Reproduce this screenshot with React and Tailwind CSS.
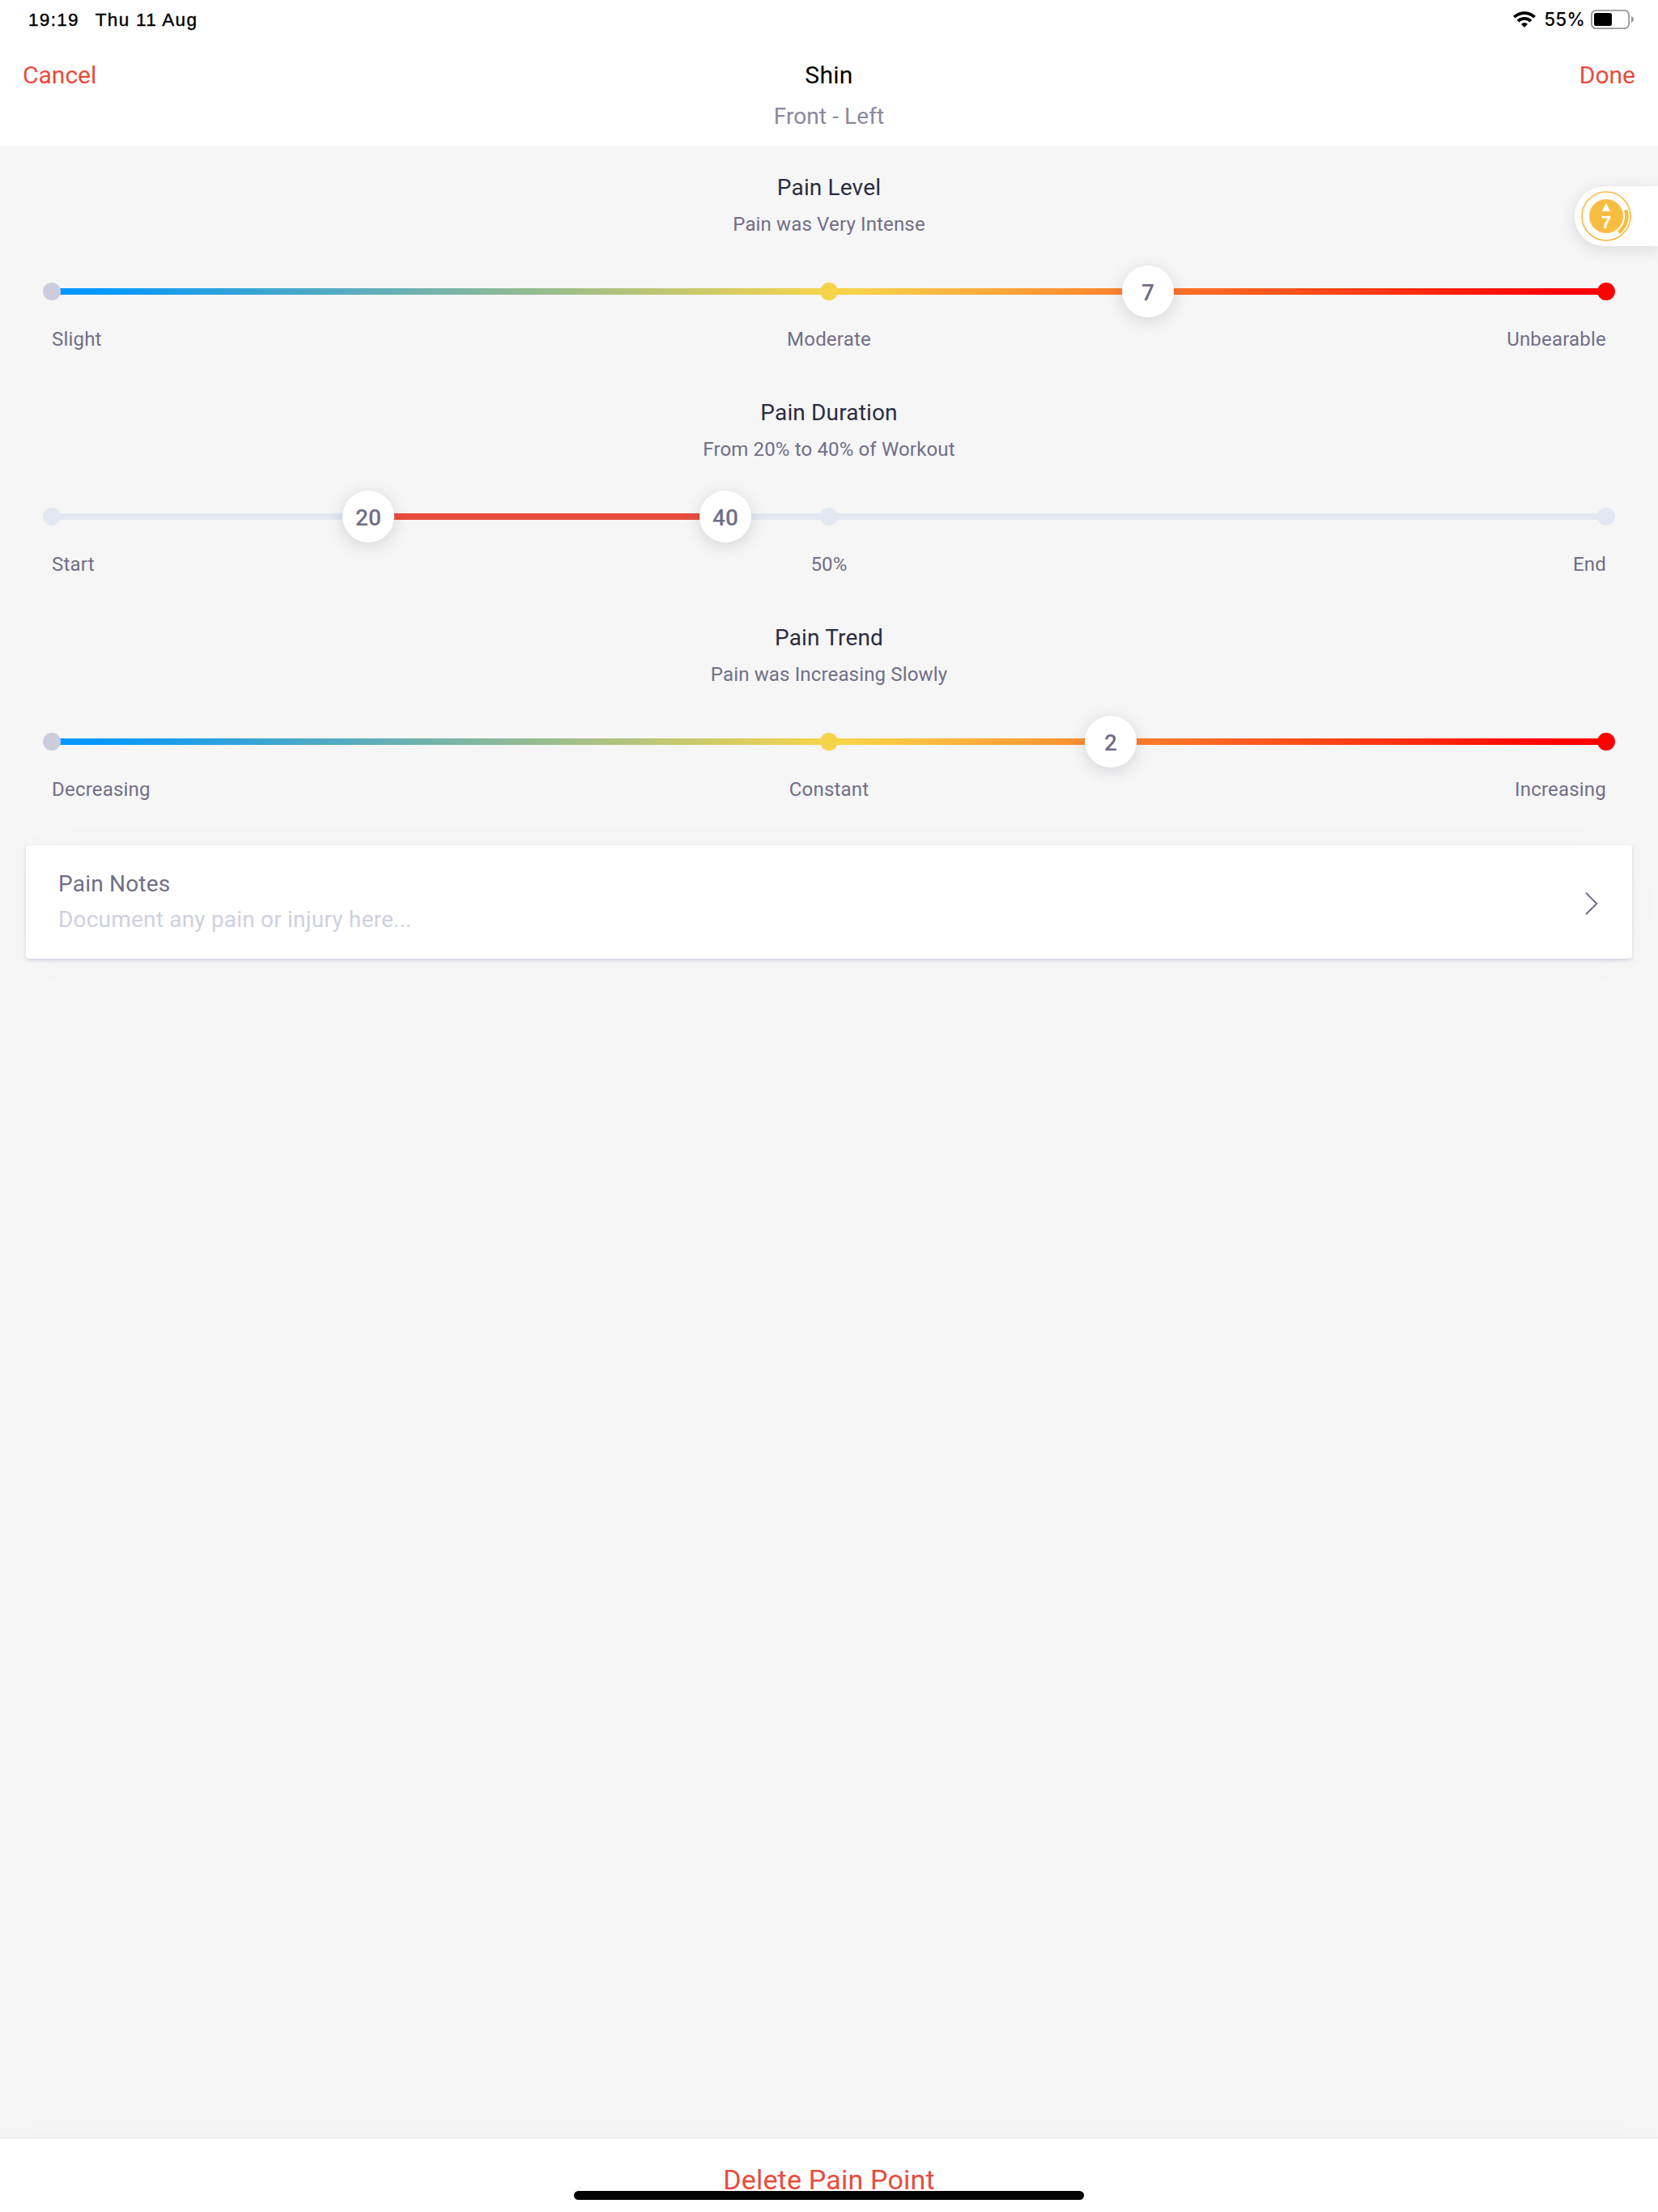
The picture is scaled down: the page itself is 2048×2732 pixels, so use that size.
import React from 'react';

const RAINBOW = 'bg-[linear-gradient(90deg,#0096ff_0%,#0096ff_2%,#f6d44a_50%,#f9d048_52%,#ff0000_97%,#ff0000_100%)]';

const sliders = [
  {
    title: 'Pain Level',
    subtitle: 'Pain was Very Intense',
    labels: ['Slight', 'Moderate', 'Unbearable'],
    track: RAINBOW,
    dots: ['bg-[#cccddc]', 'bg-[#f6d44a]', 'bg-[#ff0000]'],
    thumbs: [{ value: 7, at: 1354 }],
  },
  {
    title: 'Pain Duration',
    subtitle: 'From 20% to 40% of Workout',
    labels: ['Start', '50%', 'End'],
    track: 'bg-[#e3e7f1]',
    dots: ['bg-[#e3e7f1]', 'bg-[#e3e7f1]', 'bg-[#e3e7f1]'],
    thumbs: [{ value: 20, at: 391 }, { value: 40, at: 832 }],
    range: true,
  },
  {
    title: 'Pain Trend',
    subtitle: 'Pain was Increasing Slowly',
    labels: ['Decreasing', 'Constant', 'Increasing'],
    track: RAINBOW,
    dots: ['bg-[#cccddc]', 'bg-[#f6d44a]', 'bg-[#ff0000]'],
    thumbs: [{ value: 2, at: 1308 }],
  },
];

function StatusBar() {
  return (
    <div className="flex h-12 items-center pl-[35px] pr-[30px] text-black">
      <div className="flex gap-5 pt-px font-['Liberation_Sans',sans-serif] text-[22.5px] tracking-[1.3px] [-webkit-text-stroke:0.4px_#000]">
        <span>19:19</span>
        <span>Thu 11 Aug</span>
      </div>
      <svg className="ml-auto" width="28" height="20" viewBox="0 0 28 20">
        <g fill="none" stroke="#000" strokeWidth="3.8">
          <path d="M1.3 7.2a18.2 18.2 0 0 1 25.4 0" />
          <path d="M6 12.2a11.5 11.5 0 0 1 16 0" />
        </g>
        <path d="M14 20l-4-4.3a5.8 5.8 0 0 1 8 0z" />
      </svg>
      <span className="ml-[10px] font-['Inter',sans-serif] text-[22.5px] font-medium tracking-[0.2px]">55%</span>
      <svg className="ml-[7px]" width="53" height="24" viewBox="0 0 53 24">
        <rect x="0.9" y="0.9" width="46.2" height="22.2" rx="5.5" fill="none" stroke="#999" strokeWidth="1.8" />
        <rect x="4" y="4" width="22" height="16" rx="2.5" />
        <path d="M50 8c4 1.5 4 6.5 0 8z" fill="#999" />
      </svg>
    </div>
  );
}

function Header() {
  return (
    <header className="h-[180px] bg-white">
      <StatusBar />
      <div className="grid grid-cols-3 px-7 pt-[25px] text-[30px] leading-[40px] text-[#e84c3d]">
        <button className="text-left">Cancel</button>
        <h1 className="text-center tracking-[0.3px] text-black">Shin</h1>
        <button className="text-right">Done</button>
      </div>
      <p className="mt-[11px] text-center text-[28px] leading-[40px] tracking-[0.1px] text-[#8a889f]">Front - Left</p>
    </header>
  );
}

function PainBadge() {
  return (
    <div className="absolute right-0 top-[230px] flex h-[74px] w-[103px] items-center rounded-l-full bg-white pl-2 shadow-[0_4px_20px_rgba(40,40,60,0.14)]">
      <svg width="62" height="62" viewBox="0 0 62 62">
        <circle cx="31" cy="31" r="30" fill="none" stroke="#f9bc43" strokeWidth="1.7" />
        <circle cx="31" cy="31" r="21" fill="#f9bc43" />
        <path d="M55.2 23.2A25.2 25.2 0 0 1 46.2 51.1" fill="none" stroke="#f9bc43" strokeWidth="4.6" />
        <path d="M31 14.8l5.2 10.2h-10.4z" fill="#fff" />
        <text x="31" y="46" textAnchor="middle" fill="#fff" className="font-['Liberation_Sans',sans-serif] text-[22px] font-bold">7</text>
      </svg>
    </div>
  );
}

function Slider({ title, subtitle, labels, track, dots, thumbs, range }) {
  return (
    <section className="h-[278px] px-16 pt-8 text-center">
      <h2 className="text-[28px] leading-[40px] tracking-[0.15px] text-[#2b2d42]">{title}</h2>
      <p className="mt-[9px] text-[24px] leading-[32px] tracking-[0.15px] text-[#716e87]">{subtitle}</p>
      <div className="relative mt-[35px] flex h-16 items-center">
        <div className={`h-2 w-full ${track}`} />
        {range && (
          <div
            className="absolute h-2 bg-[#e84c3d]"
            style={{ left: thumbs[0].at, width: thumbs[1].at - thumbs[0].at }}
          />
        )}
        <div className="absolute -inset-x-[11px] flex justify-between">
          {dots.map((dot, i) => (
            <span key={i} className={`size-[22px] rounded-full ${dot}`} />
          ))}
        </div>
        {thumbs.map(({ value, at }) => (
          <div
            key={value}
            className="absolute flex size-16 -translate-x-1/2 items-center justify-center rounded-full bg-white pt-[3px] text-[28px] font-medium text-[#716e87] shadow-[0_4px_20px_rgba(60,60,90,0.18)]"
            style={{ left: at }}
          >
            {value}
          </div>
        ))}
      </div>
      <div className="mt-[11px] grid grid-cols-3 text-[24px] leading-[32px] tracking-[0.2px] text-[#716e87]">
        <span className="text-left">{labels[0]}</span>
        <span>{labels[1]}</span>
        <span className="text-right">{labels[2]}</span>
      </div>
    </section>
  );
}

function NotesCard() {
  return (
    <div className="mx-8 mt-[30px] flex h-[140px] items-center justify-between rounded-[4px] bg-white pl-10 pr-[42px] shadow-[0_2px_4px_rgba(100,100,160,0.25),0_4px_60px_rgba(0,0,0,0.02)]">
      <div className="-mt-px text-[28px] leading-[44px] tracking-[0.2px]">
        <p className="text-[#716e87]">Pain Notes</p>
        <p className="text-[#cfd0e0]">Document any pain or injury here...</p>
      </div>
      <svg className="mt-[3px]" width="16" height="28" viewBox="0 0 16 28" fill="none" stroke="#716e87" strokeWidth="2">
        <path d="M1 0.7L14.3 14L1 27.3" />
      </svg>
    </div>
  );
}

export default function App() {
  return (
    <div className="relative flex h-[2732px] w-[2048px] flex-col overflow-hidden bg-[#f6f6f6] font-['Roboto',sans-serif]">
      <Header />
      <main className="flex-1">
        {sliders.map((slider) => (
          <Slider key={slider.title} {...slider} />
        ))}
        <NotesCard />
      </main>
      <footer className="flex h-[92px] flex-col items-center border-t border-[#e4e4ee] bg-white pt-[31px] shadow-[0_0_40px_rgba(0,0,0,0.03)]">
        <button className="h-[34px] text-[34px] leading-[40px] tracking-[0.2px] text-[#e84c3d]">Delete Pain Point</button>
        <div className="z-10 h-[11px] w-[630px] rounded-full bg-black" />
      </footer>
      <PainBadge />
    </div>
  );
}
